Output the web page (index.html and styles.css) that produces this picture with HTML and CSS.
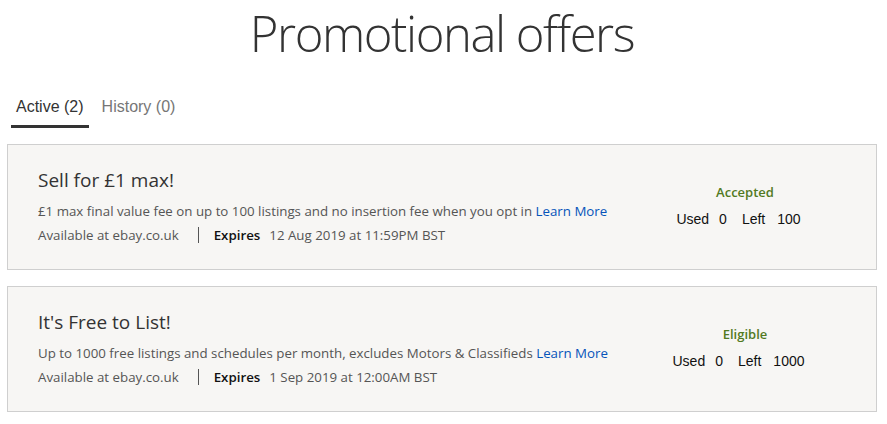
FILE: index.html
```html
<!DOCTYPE html>
<html lang="en">
<head>
<meta charset="utf-8">
<title>Promotional offers</title>
<link rel="stylesheet" href="styles.css">
</head>
<body>
<div class="page">
  <h1 class="title">Promotional offers</h1>
  <nav class="tabs">
    <a class="tab tab-active">Active (2)</a>
    <a class="tab">History (0)</a>
  </nav>
  <div class="offers">
    <section class="offer">
      <div class="offer-main">
        <h2 class="offer-title">Sell for £1 max!</h2>
        <p class="offer-desc">£1 max final value fee on up to 100 listings and no insertion fee when you opt in <a class="learn">Learn More</a></p>
        <p class="offer-meta"><span class="site">Available at ebay.co.uk</span><span class="sep"></span><span class="exp-label">Expires</span><span class="exp-date">12 Aug 2019 at 11:59PM BST</span></p>
      </div>
      <div class="offer-status">
        <div class="status">Accepted</div>
        <div class="counts"><span>Used</span><span class="num">0</span><span class="lbl2">Left</span><span class="num2">100</span></div>
      </div>
    </section>
    <section class="offer">
      <div class="offer-main">
        <h2 class="offer-title">It's Free to List!</h2>
        <p class="offer-desc">Up to 1000 free listings and schedules per month, excludes Motors &amp; Classifieds <a class="learn">Learn More</a></p>
        <p class="offer-meta"><span class="site">Available at ebay.co.uk</span><span class="sep"></span><span class="exp-label">Expires</span><span class="exp-date">1 Sep 2019 at 12:00AM BST</span></p>
      </div>
      <div class="offer-status">
        <div class="status">Eligible</div>
        <div class="counts"><span>Used</span><span class="num">0</span><span class="lbl2">Left</span><span class="num2">1000</span></div>
      </div>
    </section>
  </div>
</div>
</body>
</html>
```

FILE: styles.css
```css
html, body {
  margin: 0;
  padding: 0;
  background: #ffffff;
}
.page {
  width: 870px;
  padding-left: 7px;
  font-family: "Open Sans", "Noto Sans", sans-serif;
  color: #333333;
}
.title {
  margin: 0;
  height: 70px;
  text-align: center;
  font-family: "Open Sans", sans-serif;
  font-weight: 300;
  font-size: 49px;
  letter-spacing: -1.45px;
  line-height: 66px;
  color: #333333;
}
.tabs {
  display: flex;
  gap: 8px;
  padding-left: 4px;
  padding-top: 21px;
  height: 58px;
  box-sizing: border-box;
  align-items: flex-start;
  margin-bottom: 16px;
}
.tab {
  font-family: "Liberation Sans", Arial, sans-serif;
  font-size: 16px;
  line-height: 32px;
  padding: 0 5px;
  color: #767676;
  border-bottom: 3px solid transparent;
  height: 37px;
  box-sizing: border-box;
}
.tab-active {
  color: #333333;
  border-bottom-color: #333333;
}
.offers {
  display: flex;
  flex-direction: column;
  gap: 16px;
}
.offer {
  display: flex;
  align-items: center;
  background: #f7f6f4;
  border: 1px solid #cfcfcf;
  height: 126px;
  box-sizing: border-box;
}
.offer-main {
  flex: 1;
  padding-left: 30px;
  padding-bottom: 2px;
}
.offer-title {
  margin: 0 0 5px;
  font-weight: 400;
  font-size: 19px;
  line-height: 28px;
  color: #333333;
}
.offer-desc {
  margin: 0;
  font-size: 13.3px;
  line-height: 24px;
  color: #555555;
}
.learn {
  color: #0654ba;
}
.offer-meta {
  margin: 0;
  font-size: 13.3px;
  line-height: 24px;
  color: #555555;
  display: flex;
  align-items: center;
}
.sep {
  display: inline-block;
  width: 1px;
  height: 16px;
  background: #555555;
  margin: 0 15px 0 19px;
}
.exp-label {
  font-weight: 600;
  color: #111111;
  margin-right: 9px;
}
.offer-status {
  width: 200px;
  margin-right: 31px;
  text-align: center;
}
.status {
  font-weight: 600;
  font-size: 13px;
  line-height: 24px;
  color: #527a1f;
  margin-bottom: 5px;
}
.counts {
  font-family: "Liberation Sans", Arial, sans-serif;
  font-size: 14px;
  line-height: 20px;
  color: #111111;
  padding-right: 13px;
  padding-bottom: 6px;
}
.counts .num {
  margin-left: 10px;
}
.counts .lbl2 {
  margin-left: 15px;
}
.counts .num2 {
  margin-left: 12px;
}
```
